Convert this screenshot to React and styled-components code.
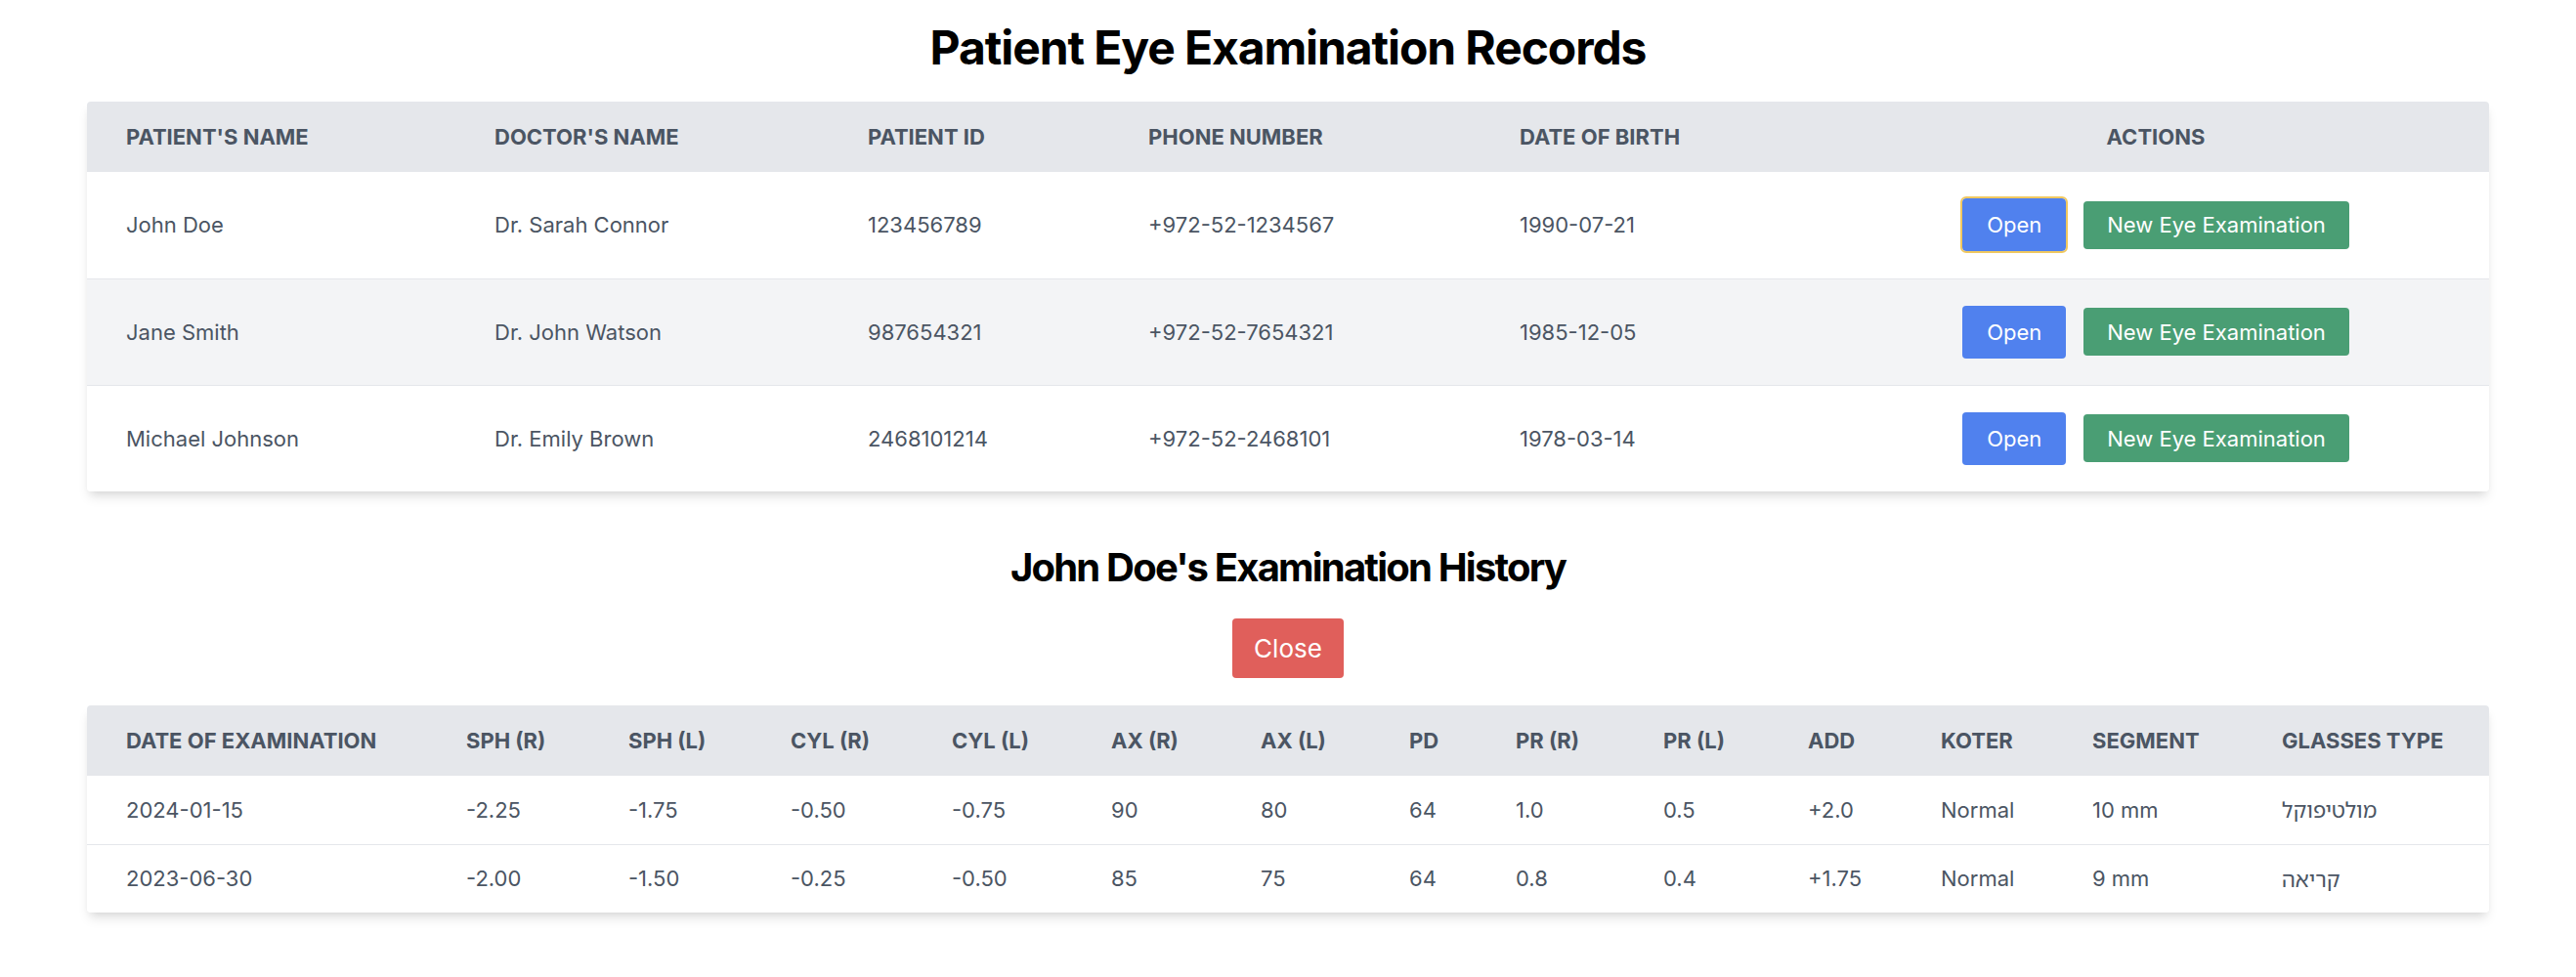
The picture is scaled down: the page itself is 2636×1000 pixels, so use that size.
import React from 'react';
import styled, { createGlobalStyle, css } from 'styled-components';

const GlobalStyle = createGlobalStyle`
  html, body {
    margin: 0;
    padding: 0;
    background: #ffffff;
  }
  body {
    font-family: Inter, "Noto Sans", "Noto Sans Hebrew", sans-serif;
    -webkit-font-smoothing: antialiased;
  }
`;

const patients = [
  { name: 'John Doe', doctor: 'Dr. Sarah Connor', id: '123456789', phone: '+972-52-1234567', dob: '1990-07-21', focused: true },
  { name: 'Jane Smith', doctor: 'Dr. John Watson', id: '987654321', phone: '+972-52-7654321', dob: '1985-12-05' },
  { name: 'Michael Johnson', doctor: 'Dr. Emily Brown', id: '2468101214', phone: '+972-52-2468101', dob: '1978-03-14' },
];

const patientCols = [
  { label: "Patient's Name", w: 377 },
  { label: "Doctor's Name", w: 382 },
  { label: 'Patient ID', w: 287 },
  { label: 'Phone Number', w: 380 },
  { label: 'Date of Birth', w: 350 },
  { label: 'Actions', w: 682, center: true },
];

const examCols = [
  { label: 'Date of Examination', w: 348 },
  { label: 'SPH (R)', w: 166 },
  { label: 'SPH (L)', w: 166 },
  { label: 'CYL (R)', w: 165 },
  { label: 'CYL (L)', w: 163 },
  { label: 'AX (R)', w: 153 },
  { label: 'AX (L)', w: 152 },
  { label: 'PD', w: 109 },
  { label: 'PR (R)', w: 151 },
  { label: 'PR (L)', w: 148 },
  { label: 'ADD', w: 136 },
  { label: 'Koter', w: 155 },
  { label: 'Segment', w: 194 },
  { label: 'Glasses Type', w: 253 },
];

const exams = [
  ['2024-01-15', '-2.25', '-1.75', '-0.50', '-0.75', '90', '80', '64', '1.0', '0.5', '+2.0', 'Normal', '10 mm', 'מולטיפוקל'],
  ['2023-06-30', '-2.00', '-1.50', '-0.25', '-0.50', '85', '75', '64', '0.8', '0.4', '+1.75', 'Normal', '9 mm', 'קריאה'],
];

const App = () => (
  <>
    <GlobalStyle />
    <Page>
      <Title>Patient Eye Examination Records</Title>
      <Card>
        <Table>
          <colgroup>
            {patientCols.map((c) => (
              <Col key={c.label} $w={c.w} />
            ))}
          </colgroup>
          <thead>
            <HeadRow>
              {patientCols.map((c) => (
                <Th key={c.label} $center={c.center}>
                  {c.label}
                </Th>
              ))}
            </HeadRow>
          </thead>
          <tbody>
            {patients.map((p, i) => (
              <Row key={p.id} $striped={i % 2 === 1} $tall>
                <Td>{p.name}</Td>
                <Td>{p.doctor}</Td>
                <Td>{p.id}</Td>
                <Td>{p.phone}</Td>
                <Td>{p.dob}</Td>
                <Td>
                  <Actions>
                    <Button $variant="open" $focused={p.focused}>
                      Open
                    </Button>
                    <Button $variant="new">New Eye Examination</Button>
                  </Actions>
                </Td>
              </Row>
            ))}
          </tbody>
        </Table>
      </Card>

      <SubTitle>John Doe's Examination History</SubTitle>
      <CloseWrap>
        <Button $variant="close">Close</Button>
      </CloseWrap>

      <Card>
        <Table>
          <colgroup>
            {examCols.map((c) => (
              <Col key={c.label} $w={c.w} />
            ))}
          </colgroup>
          <thead>
            <HeadRow>
              {examCols.map((c) => (
                <Th key={c.label}>{c.label}</Th>
              ))}
            </HeadRow>
          </thead>
          <tbody>
            {exams.map((row) => (
              <Row key={row[0]}>
                {row.map((cell, j) => (
                  <Td key={j}>{cell}</Td>
                ))}
              </Row>
            ))}
          </tbody>
        </Table>
      </Card>
    </Page>
  </>
);

const Page = styled.main`
  padding: 20px 89px 40px;
  display: flex;
  flex-direction: column;
`;

const Title = styled.h1`
  margin: 0 0 26px;
  text-align: center;
  font-size: 48px;
  line-height: 58px;
  font-weight: 700;
  color: #000;
  letter-spacing: -1.1px;
`;

const SubTitle = styled.h2`
  margin: 54px 0 26px;
  text-align: center;
  font-size: 40px;
  line-height: 48px;
  font-weight: 700;
  color: #000;
  letter-spacing: -1.8px;
`;

const CloseWrap = styled.div`
  display: flex;
  justify-content: center;
  margin-bottom: 26px;
`;

const Card = styled.div`
  background: #fff;
  border-radius: 4px;
  overflow: hidden;
  box-shadow: 0 8px 12px -2px rgba(0, 0, 0, 0.1), 0 4px 8px -4px rgba(0, 0, 0, 0.1);
`;

const Table = styled.table`
  width: 100%;
  border-collapse: collapse;
  table-layout: fixed;
`;

const Col = styled.col`
  width: ${(p) => p.$w}px;
`;

const HeadRow = styled.tr`
  background: #e5e7eb;
  height: 72px;
`;

const Th = styled.th`
  padding: 0 40px;
  text-align: ${(p) => (p.$center ? 'center' : 'left')};
  font-size: 22px;
  font-weight: 700;
  text-transform: uppercase;
  color: #4b5563;
  white-space: nowrap;
`;

const Row = styled.tr`
  background: ${(p) => (p.$striped ? '#f3f4f6' : '#fff')};
  height: ${(p) => (p.$tall ? 109 : 70)}px;
  border-bottom: 1px solid #e5e7eb;

  &:last-child {
    border-bottom: none;
  }
`;

const Td = styled.td`
  padding: 0 40px;
  font-size: 22px;
  color: #4b5563;
  white-space: nowrap;
`;

const Actions = styled.div`
  display: flex;
  justify-content: center;
  align-items: center;
  gap: 14px;
`;

const variants = {
  open: css`
    background: #5081ee;
    height: 58px;
    padding: 0 25px;
    font-size: 22px;
  `,
  new: css`
    background: #4a9e74;
    height: 53px;
    padding: 0 24px;
    font-size: 22px;
  `,
  close: css`
    background: #e05f5b;
    height: 65px;
    padding: 0 22px;
    font-size: 26px;
  `,
};

const Button = styled.button`
  ${(p) => variants[p.$variant]}
  box-sizing: border-box;
  border: 2px solid ${(p) => (p.$focused ? '#f0c860' : 'transparent')};
  background-clip: padding-box;
  border-radius: 6px;
  color: #fff;
  font-family: inherit;
  font-weight: 400;
  cursor: pointer;
  display: inline-flex;
  align-items: center;
  white-space: nowrap;
`;

export default App;
